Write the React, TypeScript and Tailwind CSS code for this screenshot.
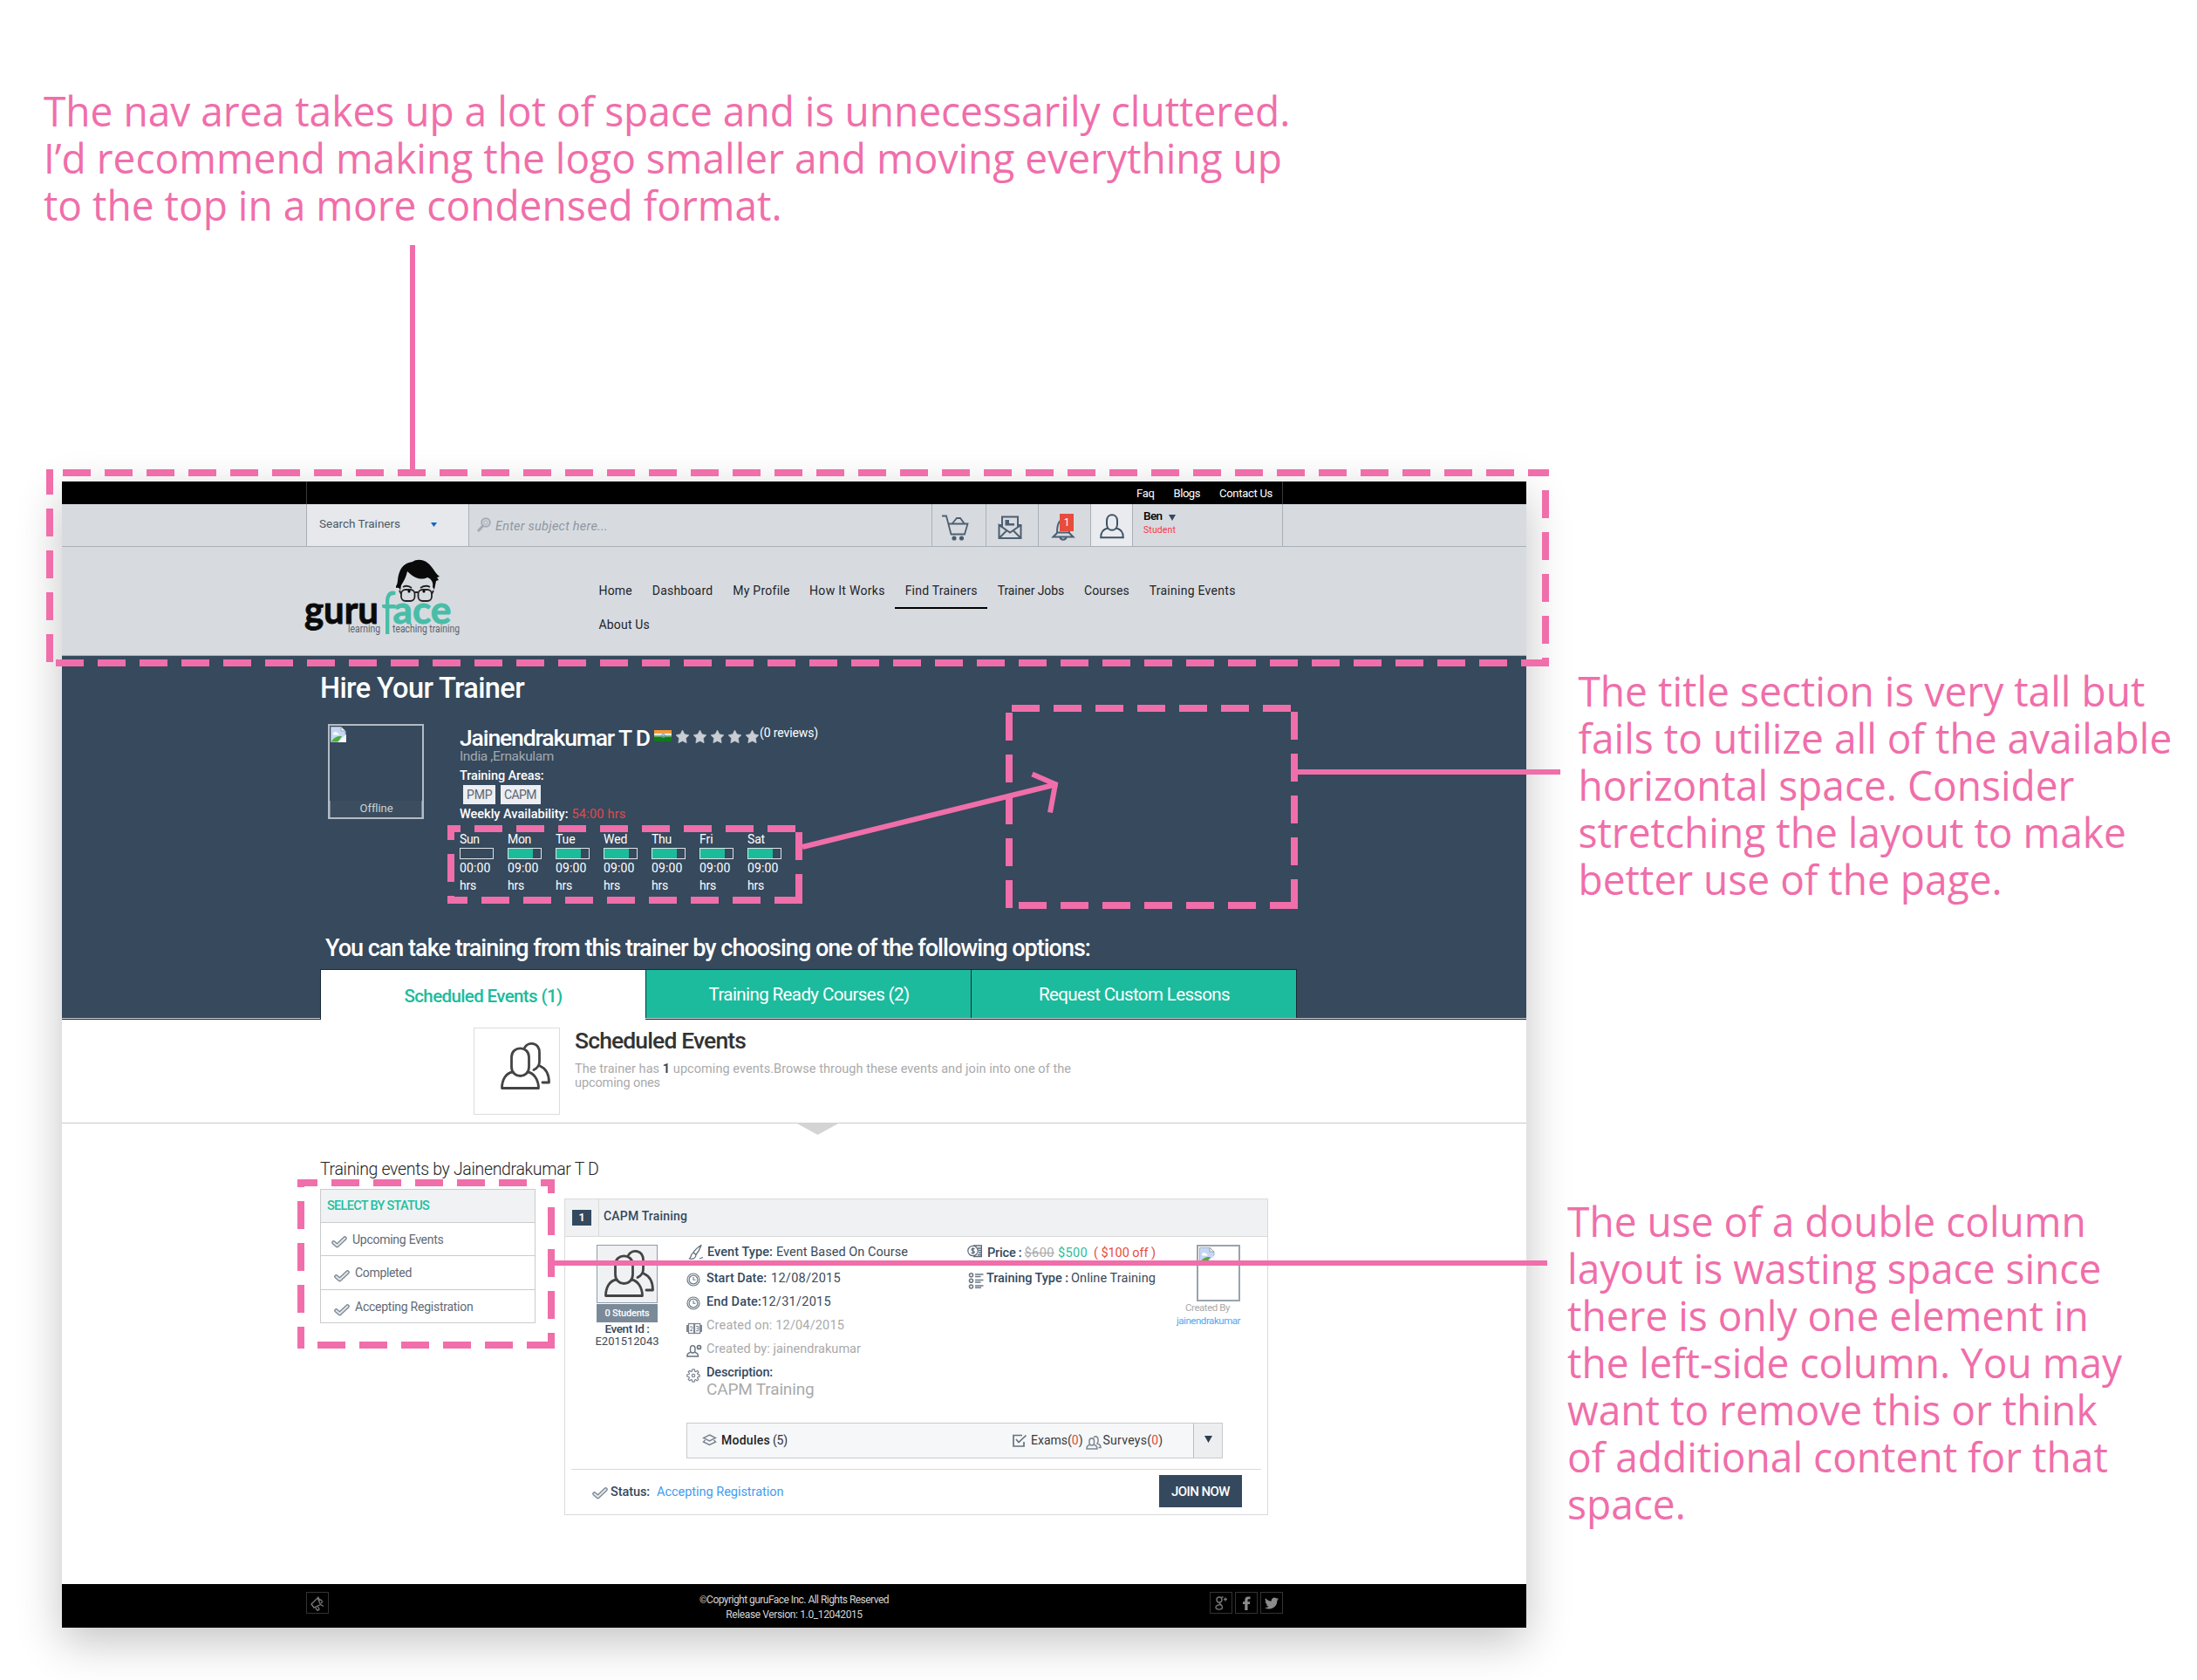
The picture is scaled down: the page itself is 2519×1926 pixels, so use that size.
import React, { useLayoutEffect, useRef, useState } from "react";

type FitProps = { w: number; className?: string; children: React.ReactNode };

/** A single line of text whose tracking is adjusted to fill the given width. */
function Fit({ w, className = "", children }: FitProps) {
  const ref = useRef<HTMLSpanElement>(null);
  const [spacing, setSpacing] = useState(0);
  useLayoutEffect(() => {
    const el = ref.current;
    if (!el) return;
    el.style.letterSpacing = "0px";
    const natural = el.getBoundingClientRect().width;
    const count = Math.max(1, (el.textContent || "").length);
    const next = (w - natural) / count;
    el.style.letterSpacing = next + "px";
    setSpacing(next);
  }, [w]);
  return (
    <span className={"block shrink-0 whitespace-pre " + className} style={{ width: w }}>
      <span ref={ref} className="inline-block" style={{ letterSpacing: spacing + "px" }}>
        {children}
      </span>
    </span>
  );
}

function People({ className = "" }: { className?: string }) {
  return (
    <svg viewBox="0 0 57 54" className={className} fill="none" stroke="#444" strokeWidth="2.8" strokeLinecap="round" strokeLinejoin="round">
      <path d="M12.500 17C12.500 3.500 32.500 3.500 32.500 17V28C32.500 42 12.500 42 12.500 28Z" />
      <path d="M14 34C6 35 1.500 43 1.500 52.500H43.500C43.500 43 38 35 31 34" />
      <path d="M27.500 6C32-1.500 44.500 0 44.500 12V22C44.500 27 41 30 38 31.500" />
      <path d="M45 27C52 30 55.500 37 55.500 46H48" />
    </svg>
  );
}

function Check({ className = "" }: { className?: string }) {
  return (
    <svg viewBox="0 0 18 14" className={"h-[14px] w-[18px] " + className} fill="none">
      <path d="M2.500 7.500L6.500 11L15.500 2.500" stroke="#7b8794" strokeWidth="4.600" strokeLinecap="round" strokeLinejoin="round" />
      <path d="M2.500 7.500L6.500 11L15.500 2.500" stroke="#e3e7ea" strokeWidth="2" strokeLinecap="round" strokeLinejoin="round" />
    </svg>
  );
}

function BrokenImage({ className = "" }: { className?: string }) {
  return (
    <svg viewBox="0 0 18 18" className={"h-[18px] w-[18px] " + className}>
      <path d="M.5.5H12L17 5V17.500H.500Z" fill="#c5d6f5" stroke="#aab2ba" />
      <path d="M3 8.500C3 6 6.500 5 7.500 7.500C10 7.500 10 9.500 9 9.500H3.500Z" fill="#fff" />
      <path d="M1 17C4 12 8 10.500 13 11L9 17Z" fill="#4caf3a" />
      <path d="M8 18L18 8.500V18Z" fill="#fff" fillOpacity=".85" />
      <path d="M12 .5V5H17Z" fill="#fff" stroke="#98a0a8" />
    </svg>
  );
}

function Down({ className = "" }: { className?: string }) {
  return (
    <svg viewBox="0 0 10 8" className={className} preserveAspectRatio="none">
      <path d="M0 0H10L5 8Z" fill="currentColor" />
    </svg>
  );
}

function Logo() {
  return (
    <svg viewBox="349 641 180 90" className="h-[90px] w-[180px] overflow-visible">
      <path d="M454 672C457 668 455 664 458 656C461 647 468 645 473 644C480 639 490 643 494 649C499 655 500 658 504 661L501 662L503 665L500 666L498 676L496 673C497 668 495 664 490 662C482 666 474 662 467 655C466 661 463 666 460 671L459 677C458 674 457 673 454 674Z" fill="#0a0a0a" />
      <g fill="none" stroke="#222" strokeWidth="1.800">
        <rect x="460" y="676" width="15.500" height="13" rx="5" />
        <rect x="479.500" y="676" width="15.500" height="13" rx="5" />
        <path d="M475.500 679H479.500M462 673Q467 670 472 674M482 674Q488 670 493 673M458 677L460 681M497 677L495 681" />
      </g>
      <circle cx="469" cy="678" r="1.600" />
      <circle cx="486" cy="678" r="1.600" />
      <g fontFamily="Lato, sans-serif" strokeLinejoin="round" strokeWidth="0.900">
        <text x="349" y="714.500" fontSize="44" fontWeight="700" fill="#0a0a0a" stroke="#0a0a0a" textLength="85" lengthAdjust="spacingAndGlyphs">guru</text>
        <text x="437" y="726.500" fontSize="67" fill="#48bda8" textLength="17" lengthAdjust="spacingAndGlyphs">f</text>
        <text x="450.500" y="714.500" fontSize="44" fontWeight="700" fill="#48bda8" stroke="#48bda8" textLength="67" lengthAdjust="spacingAndGlyphs">ace</text>
      </g>
      <g fontFamily="Roboto, sans-serif" fontSize="12.500" fill="#59636d">
        <text x="399" y="725" textLength="37" lengthAdjust="spacingAndGlyphs">learning</text>
        <text x="450" y="725" textLength="77" lengthAdjust="spacingAndGlyphs">teaching training</text>
      </g>
    </svg>
  );
}

const NAV: [string, number][] = [
  ["Home", 38.5],
  ["Dashboard", 69.5],
  ["My Profile", 65],
  ["How It Works", 86.700],
  ["Find Trainers", 83.200],
  ["Trainer Jobs", 76.500],
  ["Courses", 51.700],
  ["Training Events", 99],
  ["About Us", 58.600],
];

function Header() {
  return (
    <header>
      <div className="h-[26px] bg-black pl-[280px]">
        <div className="flex h-full w-[1120px] justify-end gap-[22px] border-x border-[#3a3a3a] pr-[11px] text-[13px] leading-[27px] text-white">
          <Fit w={20.500}>Faq</Fit>
          <Fit w={30.500}>Blogs</Fit>
          <Fit w={61}>Contact Us</Fit>
        </div>
      </div>
      <div className="h-[49px] border-b border-[#a9b0b7] bg-[#d7dbe0] pl-[280px]">
        <div className="flex h-full w-[1120px] border-x border-[#a9b0b7]">
          <div className="flex w-[186px] border-r border-[#a9b0b7] bg-[#e6e8eb] pl-[14px] text-[13.500px] leading-[45px] text-[#4c5866]">
            <Fit w={93}>Search Trainers</Fit>
            <Down className="mt-[21px] ml-[35px] h-[5px] w-[7px] text-[#1265c6]" />
          </div>
          <div className="flex flex-1 items-start pl-[9px]">
            <svg viewBox="0 0 16 17" className="mt-[15px] h-[17px] w-[16px]" fill="none" stroke="#a5abb2">
              <circle cx="10" cy="6" r="4.800" strokeWidth="2" />
              <circle cx="10" cy="6" r="2.200" strokeWidth="1" />
              <path d="M6.500 10L2 15" strokeWidth="3.200" strokeLinecap="round" />
            </svg>
            <Fit w={129} className="ml-[5px] text-[14.500px] leading-[51px] text-[#8f97a0] italic">Enter subject here...</Fit>
          </div>
          <div className="w-[62px] border-l border-[#a9b0b7] pt-[12px] pl-[11px]">
            <svg viewBox="0 0 31 30" className="h-[30px] w-[31px]" fill="none" stroke="#4d5f71" strokeWidth="1.800">
              <path d="M0 1.500H5L10.500 22.500H26L29.500 10.500H7.500M12 10L17 4H21L25.500 10" />
              <circle cx="14" cy="27" r="1.700" fill="#34495e" />
              <circle cx="22.500" cy="27" r="1.700" fill="#34495e" />
            </svg>
          </div>
          <div className="w-[60px] border-l border-[#a9b0b7] pt-[13px] pl-[13px]">
            <svg viewBox="0 0 28 28" className="h-[28px] w-[28px]" fill="none" stroke="#4d5f71" strokeWidth="2">
              <path d="M5 14V1.500H23V14M1.500 11H4M24 11H26.500V26H1.500V11L14 19.500L26.500 11M2 25.500L10.500 17M26 25.500L17.500 17" />
              <path d="M8.500 5H13V9H19V11.500H8.500Z" fill="#4d5f71" stroke="none" />
            </svg>
          </div>
          <div className="relative w-[60px] border-l border-[#a9b0b7] pt-[14px] pl-[14px]">
            <svg viewBox="0 0 28 28" className="h-[28px] w-[28px]" fill="none" stroke="#4d5f71" strokeWidth="2">
              <path d="M7 19C7 12 8 4 14 3.500C20 4 21 12 21 19L25.500 23.500H2.500Z M7 18.500H21M10.500 24C11 27.500 17 27.500 17.500 24" />
            </svg>
            <div className="absolute top-[11px] left-[24px] h-[20px] w-[16px] bg-[#e74c3c] text-center text-[12px] leading-[20px] text-white">1</div>
          </div>
          <div className="w-[49px] border-x border-[#a9b0b7] bg-[#e9ebef] pt-[11px] pl-[10px]">
            <svg viewBox="0 0 28 29" className="h-[29px] w-[28px]" fill="none" stroke="#3d5266" strokeWidth="2">
              <path d="M8 8C8-1 20-1 20 8V12C20 21 8 21 8 12Z M9 16.500C4 17.500 1.200 21 1.200 27.300H26.800C26.800 21 24 17.500 19 16.500" />
            </svg>
          </div>
          <div className="w-[171px] pt-[5px] pl-[12px]">
            <div className="flex text-[13.500px] leading-[17px] font-medium text-black">
              <Fit w={21.500}>Ben</Fit>
              <Down className="mt-[7px] ml-[7px] h-[7px] w-[8px] text-[#34495e]" />
            </div>
            <Fit w={37} className="text-[10.500px] leading-[15px] text-[#ff3347]">Student</Fit>
          </div>
        </div>
      </div>
      <div className="flex h-[125px] border-b border-[#a9b0b7] bg-[#d7dbe0] pl-[278px]">
        <div className="pt-[14px]">
          <Logo />
        </div>
        <nav className="mt-[32px] ml-[146px] flex w-[780px] flex-wrap content-start text-[14px] leading-[36px] text-[#1f2429]">
          {NAV.map(([label, w]) => (
            <a key={label} className={"border-b-2 px-[11.450px] pb-px " + (label === "Find Trainers" ? "border-black" : "border-transparent")}>
              <Fit w={w}>{label}</Fit>
            </a>
          ))}
        </nav>
      </div>
    </header>
  );
}

const DAYS: [string, string, number][] = [
  ["Sun", "00:00", 22.500],
  ["Mon", "09:00", 27],
  ["Tue", "09:00", 22.500],
  ["Wed", "09:00", 27.500],
  ["Thu", "09:00", 23],
  ["Fri", "09:00", 15.500],
  ["Sat", "09:00", 20],
];

function Star() {
  return (
    <svg viewBox="0 0 16 16" className="h-[15px] w-[15px]">
      <path d="M8 0L10.600 5L16 6L12.200 9.900L13 15.800L8 13.200L3 15.800L3.800 9.900L0 6L5.400 5Z" fill="#c9ced4" stroke="#c9ced4" strokeWidth=".6" />
    </svg>
  );
}

function Hero() {
  return (
    <section className="border-b border-[#1c2a38] bg-[#36495d] text-white">
      <div className="h-[416px] border-b border-[#c6ccd2] pt-[21px] pl-[296px]">
        <Fit w={234} className="text-[32.500px] leading-[33px] font-medium">Hire Your Trainer</Fit>
        <div className="mt-[24px] flex h-[242px] pl-[9px]">
          <div className="flex h-[109px] w-[110px] flex-col justify-between border-2 border-[#b4bbc3]">
            <BrokenImage className="mt-[1px] ml-[1px]" />
            <div className="flex h-[19px] justify-center border-x border-[#7d8995] bg-[#3b4d5f] text-[13px] leading-[18px] text-[#ccd0d5]">
              <Fit w={37}>Offline</Fit>
            </div>
          </div>
          <div className="ml-[41px] pt-[2px]">
            <div className="flex">
              <Fit w={218} className="text-[26.500px] leading-[28px] font-medium">Jainendrakumar T D</Fit>
              <div className="mt-[5px] ml-[5px] flex h-[13px] w-[20px] flex-col items-center justify-center bg-linear-to-b from-[#f29a3c] from-33% via-white via-34% to-[#0f7a1b] to-66%">
                <span className="block h-[5px] w-[5px] rounded-full border border-[#5d9fd6]" />
              </div>
              <div className="mt-[5px] ml-[5px] flex gap-[5px]">
                {[0, 1, 2, 3, 4].map((i) => (
                  <Star key={i} />
                ))}
              </div>
              <Fit w={67} className="ml-[1px] text-[14px] leading-[17px]">(0 reviews)</Fit>
            </div>
            <Fit w={108} className="-mt-[2px] text-[15.500px] leading-[18px] text-[#a2a8ae]">India ,Ernakulam</Fit>
            <Fit w={96.500} className="mt-[4px] text-[14.500px] leading-[20px] font-medium">Training Areas:</Fit>
            <div className="ml-[4px] flex gap-[6px] text-[14px] leading-[23px] text-[#5b6673]">
              <span className="h-[22px] w-[37px] bg-[#eceef1] pl-[4px]">
                <Fit w={29.500}>PMP</Fit>
              </span>
              <span className="h-[22px] w-[46px] bg-[#eceef1] pl-[4px]">
                <Fit w={37}>CAPM</Fit>
              </span>
            </div>
            <div className="mt-[2px] flex gap-[4px] text-[14.500px] leading-[20px]">
              <Fit w={124.500} className="font-medium">Weekly Availability:</Fit>
              <Fit w={62} className="text-[#e04a4a]">54:00 hrs</Fit>
            </div>
            <div className="mt-[8px] flex text-[14px] leading-[20px]">
              {DAYS.map(([day, hours, w]) => (
                <div key={day} className="w-[55px]">
                  <Fit w={w}>{day}</Fit>
                  <div className="h-[13px] w-[39px] border border-[#dfe2e5]">
                    {hours !== "00:00" && <div className="h-full w-[28px] bg-[#1abc9c]" />}
                  </div>
                  <Fit w={35.500}>{hours}</Fit>
                  <Fit w={19}>hrs</Fit>
                </div>
              ))}
            </div>
          </div>
        </div>
        <Fit w={877} className="ml-[6px] text-[27px] leading-[31px] font-medium">
          You can take training from this trainer by choosing one of the following options:
        </Fit>
        <div className="mt-[8px] flex text-[20.500px]">
          <div className="relative -mb-[2px] flex h-[58px] w-[373px] justify-center border-t border-l border-[#1c2a38] bg-white leading-[60px] font-medium text-[#1abc9c]">
            <Fit w={181}>Scheduled Events (1)</Fit>
          </div>
          <div className="flex h-[56px] w-[373px] justify-center border-t border-l border-[#1c2a38] bg-[#1cbb9d] pl-px leading-[57px]">
            <Fit w={230}>Training Ready Courses (2)</Fit>
          </div>
          <div className="flex h-[56px] w-[374px] justify-center border-x border-t border-[#1c2a38] bg-[#1cbb9d] pl-px leading-[57px]">
            <Fit w={219}>Request Custom Lessons</Fit>
          </div>
        </div>
      </div>
    </section>
  );
}

function Intro() {
  return (
    <section className="relative flex h-[119px] border-b border-[#c8c8c8] pt-[9px] pl-[472px]">
      <div className="h-[100px] w-[99px] border border-[#dcdcdc] pt-[16px] pl-[30px]">
        <People className="h-[54px] w-[57px]" />
      </div>
      <div className="ml-[17px]">
        <Fit w={196} className="text-[26.500px] leading-[30px] font-medium text-[#333]">Scheduled Events</Fit>
        <Fit w={569} className="mt-[10px] text-[14.500px] leading-[16px] text-[#aaa]">
          The trainer has <b className="font-bold text-[#34495e]">1</b> upcoming events.Browse through these events and join into one of the
        </Fit>
        <Fit w={98} className="text-[14.500px] leading-[16px] text-[#aaa]">upcoming ones</Fit>
      </div>
      <Down className="absolute top-[118px] left-[841px] h-[14px] w-[51px] text-[#d4d4d4]" />
    </section>
  );
}

function Sidebar() {
  return (
    <aside className="ml-[296px] w-[247px] shrink-0 pt-[41px]">
      <Fit w={319.500} className="text-[19.500px] leading-[24px] font-light text-[#222]">Training events by Jainendrakumar T D</Fit>
      <div className="mt-[10px] border-x border-t border-[#c9cbcd] text-[14px] text-[#626a76]">
        <div className="h-[38px] border-b border-[#c9cbcd] bg-[#f0f2f4] pl-[7px] text-[14.500px] leading-[37px] font-medium text-[#1fbf9f]">
          <Fit w={117}>SELECT BY STATUS</Fit>
        </div>
        <div className="flex h-[38px] border-b border-[#c9cbcd] pl-[12px] leading-[39px]">
          <Check className="mt-[15px]" />
          <Fit w={104.500} className="ml-[6px]">Upcoming Events</Fit>
        </div>
        <div className="flex h-[39px] border-b border-[#c9cbcd] pl-[15px] leading-[39px]">
          <Check className="mt-[16px]" />
          <Fit w={65} className="ml-[6px]">Completed</Fit>
        </div>
        <div className="flex h-[38px] border-b border-[#c9cbcd] pl-[15px] leading-[39px]">
          <Check className="mt-[16px]" />
          <Fit w={135.500} className="ml-[6px]">Accepting Registration</Fit>
        </div>
      </div>
    </aside>
  );
}

function BrushIcon() {
  return (
    <svg viewBox="0 0 18 18" className="h-[18px] w-[18px]" fill="none" stroke="#66727f" strokeWidth="1.300">
      <path d="M15 .5C11 3 7 7 6 9L9 11.500C11 9 13.500 5 15 .5ZM6 9C3 10 4 14 1.500 16C5 17 9 15.500 9 11.500M13 16L17 14.500" />
    </svg>
  );
}
function ClockIcon() {
  return (
    <svg viewBox="0 0 16 16" className="h-[16px] w-[16px]" fill="none" stroke="#6b7885">
      <circle cx="8" cy="8" r="7" strokeWidth="1.200" />
      <circle cx="8" cy="8" r="4.900" strokeWidth="1.200" />
      <path d="M8 5V8.300H10.500" strokeWidth="1.100" />
    </svg>
  );
}
function CalendarIcon() {
  return (
    <svg viewBox="0 0 18 14" className="h-[14px] w-[18px]" fill="none" stroke="#7b8590" strokeWidth="1.300">
      <path d="M1 3V11M17 3V11" strokeWidth="2" />
      <rect x="2.500" y="1.500" width="6.200" height="11" />
      <rect x="9.500" y="1.500" width="6.200" height="11" />
      <path d="M4 5H6.800V7L4.300 9.500H7.200M11 4.500H13.800V9.700H11M11.500 7H13.800" strokeWidth="1" />
    </svg>
  );
}
function CreatorIcon() {
  return (
    <svg viewBox="0 0 18 15" className="h-[15px] w-[18px]" fill="none" stroke="#66727f" strokeWidth="1.400">
      <path d="M4.500 5C4.500 .5 10 .5 10 5V7C10 11 4.500 11 4.500 7ZM4.500 9.500C2 10 .8 11.500 .8 14H13.500C13.500 11.500 12.500 10 10 9.500" />
      <circle cx="14.500" cy="3.500" r="2" strokeWidth="1.700" />
    </svg>
  );
}
function GearIcon() {
  return (
    <svg viewBox="0 0 16 16" className="h-[16px] w-[16px]" fill="none" stroke="#7b8590" strokeWidth="1.200" strokeLinejoin="round">
      <path d="M6.700 .8H9.300L9.700 3.100L10.900 3.600L12.800 2.300L14 4L12.700 5.500L13 6.600L15.200 7V9.200L13 9.600L12.600 10.700L13.900 12.400L12.300 13.900L10.600 12.600L9.600 13L9.200 15.200H6.800L6.400 13L5.400 12.600L3.700 13.900L2.100 12.300L3.400 10.600L3 9.500L.8 9.100V6.900L3 6.500L3.400 5.400L2.100 3.700L3.700 2.200L5.300 3.500L6.300 3.100Z" />
      <circle cx="8" cy="8" r="1.700" />
    </svg>
  );
}
function PriceIcon() {
  return (
    <svg viewBox="0 0 17 15" className="h-[15px] w-[17px]" fill="none" stroke="#5d6b79">
      <path d="M7 1H16.500V13.500H7M12 4H16M13 6.500H16M13 9H16M12 11.500H16" strokeWidth="1.600" />
      <circle cx="6.500" cy="7" r="5.700" fill="#fff" strokeWidth="1.200" />
      <path d="M8.500 5C7.500 4 5 4 5 5.700C5 7.500 8.300 6.500 8.300 8.400C8.300 10 5.500 10 4.500 8.900M6.600 3.300V10.700" strokeWidth="1.200" />
    </svg>
  );
}
function ListIcon() {
  return (
    <svg viewBox="0 0 18 19" className="h-[19px] w-[18px]" fill="none" stroke="#6b7885" strokeWidth="1.600">
      <circle cx="3.500" cy="2.800" r="2" />
      <circle cx="3.500" cy="9.300" r="2" />
      <circle cx="3.500" cy="16" r="2" />
      <path d="M8 2H17.500M8 4.500H14.500M8 8.500H17.500M8 11H14.500M8 15H17.500M8 17.300H15" />
    </svg>
  );
}

function EventCard() {
  return (
    <article className="mt-[86px] ml-[33px] h-[363px] w-[807px] border border-[#dadada] text-[14.500px] text-[#3c4a58]">
      <div className="flex h-[43px] border-b border-[#dadada] bg-[#f0f1f3]">
        <div className="w-[39px] border-r border-[#dadada] pt-[12px] pl-[8px]">
          <div className="h-[18px] w-[22px] bg-[#34495e] text-center text-[12.500px] leading-[18px] font-bold text-white">1</div>
        </div>
        <Fit w={96} className="ml-[5px] text-[14px] leading-[39px] font-medium text-[#34495e]">CAPM Training</Fit>
      </div>
      <div className="flex h-[213px] pl-[36px]">
        <div className="flex w-[70px] flex-col items-center pt-[9px]">
          <div className="h-[67px] w-[70px] border border-[#8f9dab] bg-[#f0f1f3] pt-[5px] pl-[8px]">
            <People className="h-[54px] w-[57px]" />
          </div>
          <div className="mt-px mb-px flex h-[21px] w-[70px] justify-center bg-[#7b8a98] text-[11px] leading-[21px] font-medium text-white">
            <Fit w={51}>0 Students</Fit>
          </div>
          <Fit w={51} className="-mt-px text-[13.500px] leading-[14px] font-medium text-[#34495e]">Event Id :</Fit>
          <Fit w={73} className="mt-px text-[13px] leading-[14px]">E201512043</Fit>
        </div>
        <div className="ml-[33px] w-[322px] pt-[9px] text-[14.500px]">
          <div className="flex h-[31px] items-start gap-[4px] pl-[2px] leading-[17px]">
            <BrushIcon />
            <Fit w={75} className="font-medium text-[#34495e]">Event Type:</Fit>
            <Fit w={151}>Event Based On Course</Fit>
          </div>
          <div className="flex h-[27px] items-start gap-[5px] leading-[16px]">
            <span className="mt-[1px] w-[18px]"><ClockIcon /></span>
            <Fit w={69} className="font-medium text-[#34495e]">Start Date:</Fit>
            <Fit w={80}>12/08/2015</Fit>
          </div>
          <div className="flex h-[27px] items-start leading-[16px]">
            <span className="mt-[1px] mr-[5px] w-[18px]"><ClockIcon /></span>
            <Fit w={63} className="font-medium text-[#34495e]">End Date:</Fit>
            <Fit w={80}>12/31/2015</Fit>
          </div>
          <div className="flex h-[27px] items-start gap-[5px] leading-[16px] text-[#aaa]">
            <span className="mt-[4px]"><CalendarIcon /></span>
            <Fit w={158}>Created on: 12/04/2015</Fit>
          </div>
          <div className="flex h-[27px] items-start gap-[5px] leading-[16px] text-[#aaa]">
            <span className="mt-[2px]"><CreatorIcon /></span>
            <Fit w={177}>Created by: jainendrakumar</Fit>
          </div>
          <div className="flex items-start gap-[5px] leading-[16px]">
            <span className="mt-[3px] w-[18px]"><GearIcon /></span>
            <div>
              <Fit w={76} className="font-medium text-[#34495e]">Description:</Fit>
              <Fit w={123.500} className="text-[19px] leading-[22px] text-[#aaa]">CAPM Training</Fit>
            </div>
          </div>
        </div>
        <div className="w-[240px] pt-[9px]">
          <div className="flex h-[32px] items-start leading-[19px]">
            <PriceIcon />
            <Fit w={39.500} className="ml-[6px] font-medium text-[#34495e]">Price :</Fit>
            <Fit w={34.500} className="ml-[3px] text-[#aaa]">
              <span className="line-through">$600</span>
            </Fit>
            <Fit w={34} className="ml-[4px] text-[#2dbd9b]">$500</Fit>
            <Fit w={71} className="ml-[7px] text-[#e74c3c]">( $100 off )</Fit>
          </div>
          <div className="flex items-start pl-[1px] leading-[16px]">
            <ListIcon />
            <Fit w={94} className="-mt-px ml-[3px] font-medium text-[#34495e]">Training Type :</Fit>
            <Fit w={97} className="-mt-px ml-[3px]">Online Training</Fit>
          </div>
        </div>
        <div className="flex w-[73px] flex-col items-end pt-[9px]">
          <div className="h-[65px] w-[50px] border-2 border-[#9aa3ad] p-px">
            <BrokenImage />
          </div>
          <Fit w={51} className="mr-[12px] text-[11.500px] leading-[14px] text-[#aaa]">Created By</Fit>
          <Fit w={73} className="text-[11.500px] leading-[16px] text-[#4fa8f5]">jainendrakumar</Fit>
        </div>
      </div>
      <div className="ml-[139px] flex h-[41px] w-[615px] border border-[#c9cbcd] bg-[#f6f7f9] pl-[17px] leading-[39px]">
        <svg viewBox="0 0 17 14" className="mt-[12px] h-[14px] w-[17px]" fill="none" stroke="#7b8590" strokeWidth="1.500">
          <path d="M8.500 1L15.500 4.500L8.500 8L1.500 4.500ZM3.500 7L1.500 9L8.500 12.500L15.500 9L13.500 7" />
        </svg>
        <Fit w={56} className="ml-[5px] text-[14px] font-medium text-[#222]">Modules</Fit>
        <Fit w={17} className="ml-[3px] text-[14px] text-[#333]">(5)</Fit>
        <svg viewBox="0 0 17 15" className="mt-[12px] ml-[258px] h-[15px] w-[17px]" fill="none" stroke="#66727f" strokeWidth="1.700">
          <path d="M11 1.500H1V14H13V9M4 6L7 9.500L15.500 1.500" />
        </svg>
        <Fit w={59.500} className="ml-[4px] text-[14px] text-[#3b3b3b]">Exams(<span className="text-[#e04a3f]">0</span>)</Fit>
        <svg viewBox="0 0 18 16" className="mt-[14px] ml-[3px] h-[16px] w-[18px]" fill="none" stroke="#7b8590" strokeWidth="1.500">
          <path d="M4 6C4 1.500 9.500 1.500 9.500 6V8C9.500 12 4 12 4 8ZM4 10.500C2 11 1 12.500 1 15H13C13 12.500 12 11 9.500 10.500M9 2C11-.5 14 1 14 4.500V7L13 9C15.500 9.500 17 11 17 13.500H14.500" />
        </svg>
        <Fit w={69} className="ml-[2px] text-[14px] text-[#3b3b3b]">Surveys(<span className="text-[#e04a3f]">0</span>)</Fit>
        <div className="ml-auto w-[33px] border-l border-[#b9bdc2] bg-[#eceef0] pt-[14px] pl-[12px]">
          <Down className="h-[8px] w-[9px] text-[#2c3e50]" />
        </div>
      </div>
      <div className="mx-[7px] mt-[12px] flex h-[51px] border-t border-[#dadada] pl-[24px]">
        <Check className="mt-[20px]" />
        <Fit w={45} className="ml-[3px] leading-[52px] font-medium text-[#34495e]">Status:</Fit>
        <Fit w={145.500} className="ml-[8px] leading-[52px] text-[#3f9df2]">Accepting Registration</Fit>
        <div className="mt-[6px] mr-[22px] ml-auto flex h-[37px] w-[95px] justify-center bg-[#34495e] text-[15px] leading-[39px] font-medium text-white">
          <Fit w={67}>JOIN NOW</Fit>
        </div>
      </div>
    </article>
  );
}

function Footer() {
  return (
    <footer className="flex h-[50px] bg-black pt-[9px] pl-[280px]">
      <div className="h-[25px] w-[26px] border border-[#333] p-[3px]">
        <svg viewBox="0 0 18 18" className="h-[18px] w-[18px]" fill="none" stroke="#7a7a7a" strokeWidth="1.300">
          <path d="M2 10L9 3L12.500 10.500L5 14ZM2 10L5 14M9.500 1.500L12 6M12.500 10.500L16 12.500M6 13L9 17.500L11 16L9 12M11 5C14 4 15.500 8 13 9" />
        </svg>
      </div>
      <div className="ml-[425px] flex w-[217px] flex-col items-center pt-px text-[12px] leading-[17px] text-[#d4d4d4]">
        <Fit w={217}><span className="text-[11px]">©</span>Copyright guruFace Inc. All Rights Reserved</Fit>
        <Fit w={156.500}>Release Version: 1.0_12042015</Fit>
      </div>
      <div className="ml-[368px] flex gap-[3px] text-[#888]">
        <div className="h-[25px] w-[26px] border border-[#333] pt-[3px] pl-[4px]">
          <svg viewBox="0 0 16 18" className="h-[18px] w-[16px]" fill="none" stroke="#777" strokeWidth="1.400">
            <circle cx="6" cy="5" r="3" />
            <path d="M8.500 2H10.500M6.500 8C5 9.500 9.500 10.500 9.500 13.500C9.500 17 2 17 2 13.500C2 11.500 5 10.500 7.500 10.800M11 4.500H15M13 2.500V6.500" />
          </svg>
        </div>
        <div className="h-[25px] w-[26px] border border-[#333] pt-[4px] pl-[8px]">
          <svg viewBox="0 0 9 16" className="h-[16px] w-[9px]" fill="#8c8c8c">
            <path d="M2.300 16V9H0V6.200H2.300V4.200C2.300 1.700 3.700.4 6 .4L8.500.5V3.200H7C5.800 3.200 5.500 3.700 5.500 4.600V6.200H8.300L7.900 9H5.500V16Z" />
          </svg>
        </div>
        <div className="h-[25px] w-[26px] border border-[#333] p-[4px]">
          <svg viewBox="0 0 24 24" className="h-[16px] w-[16px]" fill="#8c8c8c">
            <path d="M24 4.600a10 10 0 0 1-2.800.8 4.900 4.900 0 0 0 2.100-2.700c-1 .6-2 1-3.100 1.200a4.900 4.900 0 0 0-8.400 4.500A14 14 0 0 1 1.700 3.200a4.900 4.900 0 0 0 1.500 6.500 5 5 0 0 1-2.200-.6c0 2.400 1.600 4.400 3.900 4.900a5 5 0 0 1-2.200.1 4.900 4.900 0 0 0 4.600 3.400A10 10 0 0 1 0 19.500 14 14 0 0 0 21.500 7.100 10 10 0 0 0 24 4.600z" />
          </svg>
        </div>
      </div>
    </footer>
  );
}

/** Review marks: dashed frames, connectors and the arrow. */
function Marks() {
  const dash = "32 16";
  return (
    <svg viewBox="0 0 2519 1926" className="pointer-events-none absolute top-0 left-0 h-[1926px] w-[2519px]" fill="none" stroke="#f06eaa">
      <g strokeWidth="8" strokeDasharray={dash}>
        <path d="M72 542H1776" />
        <path d="M64 760H1776" />
        <path d="M57 759V538" />
        <path d="M1772 562V764" />

        <path d="M544 950H912" />
        <path d="M552 1032H920" />
        <path d="M916 954V1036" />
        <path d="M517 979V1036" />

        <path d="M1160 812H1480" />
        <path d="M1168 1038H1488" />
        <path d="M1157 817V1041" />
        <path d="M1484 816V1042" />

        <path d="M380 1356H636" />
        <path d="M364 1542H636" />
        <path d="M345 1377V1546" />
        <path d="M632 1384V1546" />
      </g>
      <g strokeWidth="8">
        <path d="M513 950H528M517 946V963M513 1032H536M341 1356H364M345 1352V1361M632 1352V1368" />
      </g>
      <g strokeWidth="6">
        <path d="M473 281V538" />
        <path d="M1488 885H1789" />
        <path d="M636 1448H1774" />
        <path d="M920 971L1212 899" />
        <path d="M1183.500 887.500L1210 899L1204 931.500" />
      </g>
    </svg>
  );
}

export default function App() {
  return (
    <div className="relative h-[1926px] w-[2519px] overflow-hidden bg-white font-['Roboto','Liberation_Sans',sans-serif]">
      <div className="h-[552px] w-[1600px] origin-left scale-x-[0.96] pt-[100px] pl-[52px] font-['Open_Sans','Noto_Sans',sans-serif] text-[48px] leading-[54px] whitespace-pre text-[#f06eaa]">
        {"The nav area takes up a lot of space and is unnecessarily cluttered.\nI’d recommend making the logo smaller and moving everything up\nto the top in a more condensed format."}
      </div>
      <div className="flex">
        <main className="ml-[71px] h-[1314px] w-[1679px] shrink-0 bg-white shadow-[0_16px_48px_rgba(0,0,0,0.24)]">
          <Header />
          <Hero />
          <Intro />
          <section className="flex h-[528px] items-start">
            <Sidebar />
            <EventCard />
          </section>
          <Footer />
        </main>
        <div className="ml-[47px] origin-left scale-x-[0.96] font-['Open_Sans','Noto_Sans',sans-serif] text-[48px] leading-[54px] whitespace-pre text-[#f06eaa]">
          <p className="mt-[213px] ml-[13px]">
            {"The title section is very tall but\nfails to utilize all of the available\nhorizontal space. Consider\nstretching the layout to make\nbetter use of the page."}
          </p>
          <p className="mt-[338px]">
            {"The use of a double column\nlayout is wasting space since\nthere is only one element in\nthe left-side column. You may\nwant to remove this or think\nof additional content for that\nspace."}
          </p>
        </div>
      </div>
      <Marks />
    </div>
  );
}
